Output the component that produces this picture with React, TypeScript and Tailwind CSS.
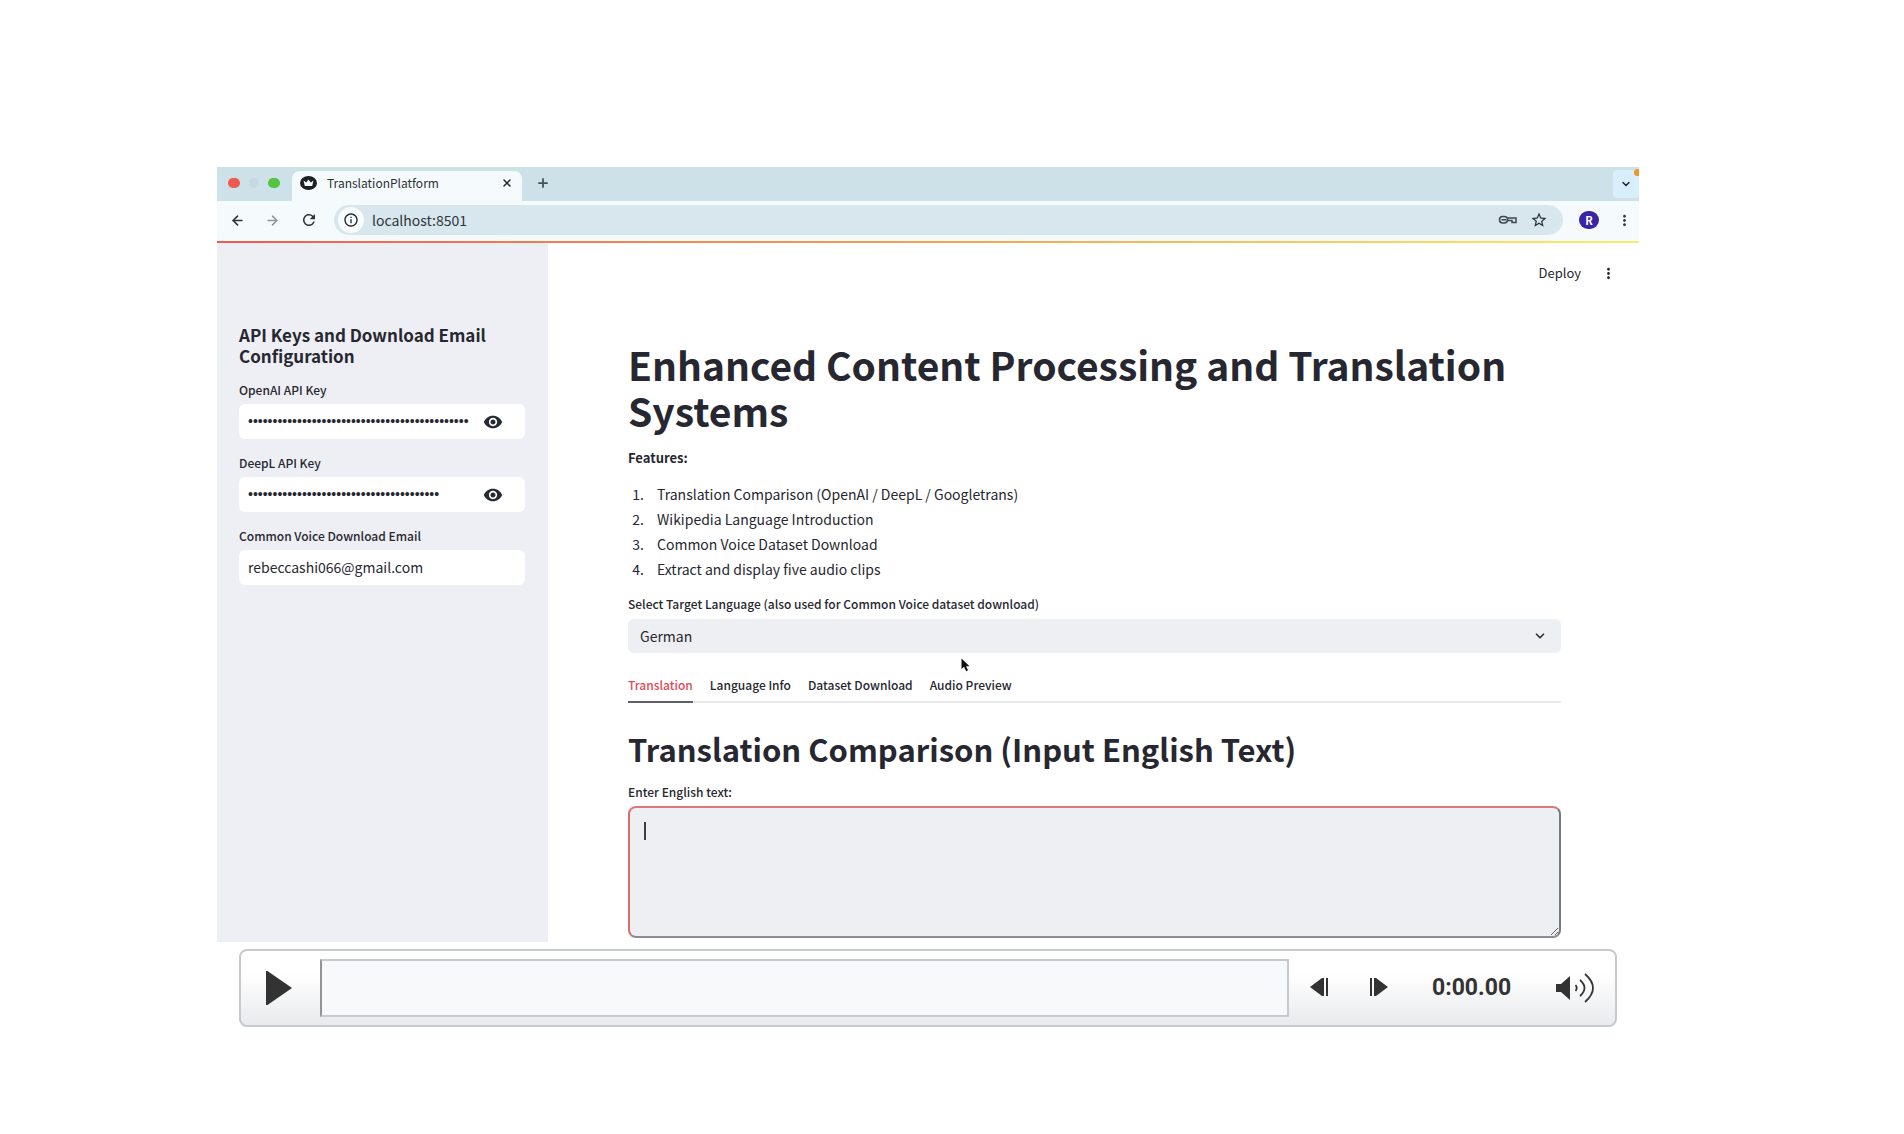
import { ArrowLeft, ArrowRight, ChevronDown, Plus, X } from "lucide-react";
import {
  MdInfoOutline,
  MdMoreVert,
  MdRefresh,
  MdStarOutline,
  MdVisibility,
} from "react-icons/md";

const features = [
  "Translation Comparison (OpenAI / DeepL / Googletrans)",
  "Wikipedia Language Introduction",
  "Common Voice Dataset Download",
  "Extract and display five audio clips",
];

const tabs = ["Translation", "Language Info", "Dataset Download", "Audio Preview"];

function CrownIcon() {
  return (
    <svg viewBox="0 0 17 16" className="h-4 w-[17px]" aria-hidden="true">
      <ellipse cx="8.5" cy="8" rx="8.5" ry="7" fill="#1c1f24" />
      <path d="M3.5 5.5 L6.2 7.4 L8.5 4.6 L10.8 7.4 L13.5 5.5 L12.2 11 H4.8 Z" fill="#f4f8fa" />
    </svg>
  );
}

function KeyIcon() {
  return (
    <svg viewBox="0 0 20 10" className="h-[10px] w-5" fill="none" stroke="#3d474d" strokeWidth="1.5" aria-hidden="true">
      <rect x="1.5" y="1.5" width="8" height="6.5" rx="3.2" />
      <path d="M3.5 4.8 H8 M9.5 3 H18 V7.5 H14 V5.5 H10" />
    </svg>
  );
}

function TabStrip() {
  return (
    <div className="flex h-[34px] items-end bg-[#cce1e8]">
      <div className="flex h-full w-[75px] shrink-0 items-center gap-[9px] rounded-br-lg pb-[2px] pl-[11px]">
        <button aria-label="Close window" className="h-[10px] w-3 rounded-full bg-[#ee5a4d]" />
        <button aria-label="Minimize window" className="h-[10px] w-[10px] rounded-full bg-[#c8d8de]" />
        <button aria-label="Zoom window" className="h-[10px] w-3 rounded-full bg-[#55c440]" />
      </div>
      <div className="flex h-[30px] w-[230px] shrink-0 items-center rounded-t-lg bg-[#f5fbfd] pr-[9px] pb-[6px] pl-2">
        <CrownIcon />
        <span className="ml-[10px] flex-1 text-[12px] leading-4 text-[#2b3035]">TranslationPlatform</span>
        <button aria-label="Close tab">
          <X className="h-3 w-3 text-[#1f2529]" strokeWidth={3} />
        </button>
      </div>
      <button aria-label="New tab" className="flex h-[34px] items-center pb-[2px] pl-[14px]">
        <Plus className="h-[14px] w-[14px] text-[#3f5057]" strokeWidth={3} />
      </button>
      <div className="relative ml-auto flex h-full w-[26px] items-center justify-center py-[3px]">
        <button aria-label="Search tabs" className="flex h-full w-full items-center justify-center rounded bg-[#d8eefa]">
          <ChevronDown className="h-3 w-3 text-[#1f2529]" strokeWidth={3} />
        </button>
        <span className="absolute top-[2px] right-0 h-[7px] w-[5px] rounded-l-full bg-[#f0952e]" />
      </div>
    </div>
  );
}

function Toolbar() {
  return (
    <div className="flex h-10 items-center bg-[#f5fbfd] pr-[6px] pb-[2px] pl-[13px]">
      <button aria-label="Back"><ArrowLeft className="h-[15px] w-[15px] text-[#2c3338]" strokeWidth={2.5} /></button>
      <button aria-label="Forward" className="ml-5"><ArrowRight className="h-[15px] w-[15px] text-[#8d979b]" strokeWidth={2.5} /></button>
      <button aria-label="Reload" className="ml-5"><MdRefresh className="h-[18px] w-[18px] text-[#2c3338]" /></button>
      <div className="ml-4 flex h-[30px] flex-1 items-center rounded-full bg-[#d8e7ed] pr-[15px] pl-1">
        <button aria-label="Site information" className="flex h-[26px] w-[26px] items-center justify-center rounded-full bg-[#f7fcfd]">
          <MdInfoOutline className="h-4 w-4 text-[#1f2529]" />
        </button>
        <input
          aria-label="Address"
          defaultValue="localhost:8501"
          className="ml-2 min-w-0 flex-1 bg-transparent text-[14px] leading-5 text-[#2f363b] outline-none"
        />
        <button aria-label="Saved passwords"><KeyIcon /></button>
        <button aria-label="Bookmark" className="ml-3"><MdStarOutline className="h-[18px] w-[18px] text-[#263036]" /></button>
      </div>
      <button aria-label="Profile" className="ml-4 flex h-[18px] w-5 items-center justify-center rounded-full bg-[#3a25a5] text-[11px] leading-none font-bold text-white">
        R
      </button>
      <button aria-label="Browser menu" className="ml-[17px]"><MdMoreVert className="h-[17px] w-[17px] text-[#333b40]" /></button>
    </div>
  );
}

function SecretField({ id, label, length }: { id: string; label: string; length: number }) {
  return (
    <div className="mb-[15px]">
      <label htmlFor={id} className="block h-[23px] text-[12px] leading-[18px] font-medium">{label}</label>
      <div className="flex h-[35px] items-center rounded-md bg-white pr-[22px] pl-[9px]">
        <input
          id={id}
          type="password"
          defaultValue={"x".repeat(length)}
          className="min-w-0 flex-1 bg-transparent font-['Liberation_Sans',sans-serif] text-[14px] outline-none"
        />
        <button aria-label={`Show ${label}`} className="ml-2"><MdVisibility className="h-5 w-5 text-[#262a33]" /></button>
      </div>
    </div>
  );
}

function Sidebar() {
  return (
    <aside className="w-[331px] shrink-0 bg-[#eeeff4] pt-[81px] pr-[23px] pl-[22px]">
      <h2 className="mb-[15px] text-[17px] leading-[21px] font-bold">API Keys and Download Email Configuration</h2>
      <SecretField id="openai-key" label="OpenAI API Key" length={45} />
      <SecretField id="deepl-key" label="DeepL API Key" length={39} />
      <label htmlFor="email" className="block h-[23px] text-[12px] leading-[18px] font-medium">Common Voice Download Email</label>
      <input
        id="email"
        type="email"
        defaultValue="rebeccashi066@gmail.com"
        className="h-[35px] w-full rounded-md bg-white px-[9px] pb-[2px] text-[14px] outline-none"
      />
    </aside>
  );
}

function MainArea() {
  return (
    <main className="min-w-0 flex-1 bg-white">
      <div className="flex h-[60px] items-center justify-end pr-[22px]">
        <button className="text-[13px] leading-5">Deploy</button>
        <button aria-label="App menu" className="ml-[19px]"><MdMoreVert className="h-[17px] w-[17px]" /></button>
      </div>
      <div className="pt-[38px] pr-[78px] pl-20">
        <h1 className="text-[39px] leading-[46px] font-bold">Enhanced Content Processing and Translation Systems</h1>
        <p className="mt-[15px] text-[13px] leading-5 font-bold">Features:</p>
        <ol className="mt-[14px] list-decimal pl-[19px] text-[14px] leading-[25px]">
          {features.map((feature) => (
            <li key={feature} className="pl-[10px]">{feature}</li>
          ))}
        </ol>
        <label htmlFor="language" className="mt-3 block h-[25px] text-[12px] leading-[20px] font-medium">
          Select Target Language (also used for Common Voice dataset download)
        </label>
        <div className="relative">
          <select id="language" defaultValue="German" className="h-[34px] w-full appearance-none rounded-md bg-[#eeeff3] px-3 text-[14px] outline-none">
            <option>German</option>
          </select>
          <ChevronDown className="pointer-events-none absolute top-[10px] right-[14px] h-[14px] w-[14px] text-[#31333f]" strokeWidth={3} />
        </div>
        <div role="tablist" className="mt-[15px] flex h-[35px] gap-[17px] border-b-2 border-[#e9eaec]">
          {tabs.map((tab, index) => (
            <button
              key={tab}
              role="tab"
              aria-selected={index === 0}
              className="-mb-[2px] flex items-center border-b-2 border-transparent text-[12px] leading-5 font-medium aria-selected:border-[#5f6066] aria-selected:text-[#e04a58]"
            >
              {tab}
            </button>
          ))}
        </div>
        <h2 className="mt-[26px] text-[31px] leading-10 font-bold">Translation Comparison (Input English Text)</h2>
        <label htmlFor="source" className="mt-[13px] block h-[24px] text-[12px] leading-5 font-medium">Enter English text:</label>
        <div className="relative">
          <textarea
            id="source"
            className="block h-[132px] w-full rounded-lg border-2 border-t-[#d8797c] border-r-[#77787f] border-b-[#8f8a93] border-l-[#dd6a6d] bg-[#eeeff3] px-4 py-3 text-[14px] outline-none"
          />
          <span className="absolute top-4 left-4 h-[18px] w-[2px] bg-[#3c3e48]" />
        </div>
      </div>
    </main>
  );
}

function Pointer() {
  return (
    <svg viewBox="0 0 9 14" className="absolute top-[491px] left-[744px] h-[14px] w-[9px]" aria-hidden="true">
      <path d="M0.5 0.5 V11 L3 8.8 L5.2 13.2 L7 12.2 L5 8.2 H8.5 Z" fill="#111" />
    </svg>
  );
}

function PlayerControls() {
  return (
    <div className="mx-[22px] mt-[7px] flex h-[78px] items-center rounded-lg border-2 border-[#c6cacf] bg-linear-to-b from-white from-30% to-[#e9eaec] pr-5 pl-[25px] text-[#333]">
      <button aria-label="Play">
        <svg viewBox="0 0 26 34" className="h-[34px] w-[26px]" fill="currentColor"><path d="M0 0 H1.5 L26 17 L1.5 34 H0 Z" /></svg>
      </button>
      <div role="slider" aria-label="Seek" aria-valuemin={0} aria-valuemax={100} aria-valuenow={0} tabIndex={0} className="ml-7 h-[58px] flex-1 border-2 border-[#c6cacf] border-l-[#949494] bg-[#f7f9fb]" />
      <button aria-label="Previous frame" className="ml-[21px] pb-[2px]">
        <svg viewBox="0 0 18 18" className="h-[18px] w-[18px]" fill="currentColor"><path d="M0 9 L12 0 H14 V18 H12 Z M16 0 H18 V18 H16 Z" /></svg>
      </button>
      <button aria-label="Next frame" className="ml-[42px] pb-[2px]">
        <svg viewBox="0 0 18 18" className="h-[18px] w-[18px]" fill="currentColor"><path d="M18 9 L6 0 H4 V18 H6 Z M0 0 H2 V18 H0 Z" /></svg>
      </button>
      <time className="ml-11 w-20 font-[Roboto,sans-serif] text-[23px] leading-8 font-bold">0:00.00</time>
      <button aria-label="Volume" className="ml-11">
        <svg viewBox="0 0 39 30" className="h-[30px] w-[39px]" fill="none" stroke="currentColor" strokeWidth="1.8">
          <path d="M0 11 H5 L14 3 V27 L5 19 H0 Z" fill="currentColor" stroke="none" />
          <path d="M19.5 12 Q22 15 19.5 18 M24 7 Q33 15 24 23 M29 1 Q45 15 29 29" />
        </svg>
      </button>
    </div>
  );
}

export default function App() {
  return (
    <div className="min-h-screen bg-white pt-[167px] pr-12 font-['Noto_Sans_CJK_SC','Open_Sans',sans-serif] text-[#262730]">
      <div className="mx-auto w-full max-w-[1422px]">
        <div className="relative overflow-hidden">
          <TabStrip />
          <Toolbar />
          <div className="h-[2px] bg-linear-to-r from-[#ee5a50] via-[#f5a04e] to-[#fbec6a]" />
          <div className="flex h-[699px]">
            <Sidebar />
            <MainArea />
          </div>
          <Pointer />
        </div>
        <PlayerControls />
      </div>
    </div>
  );
}
